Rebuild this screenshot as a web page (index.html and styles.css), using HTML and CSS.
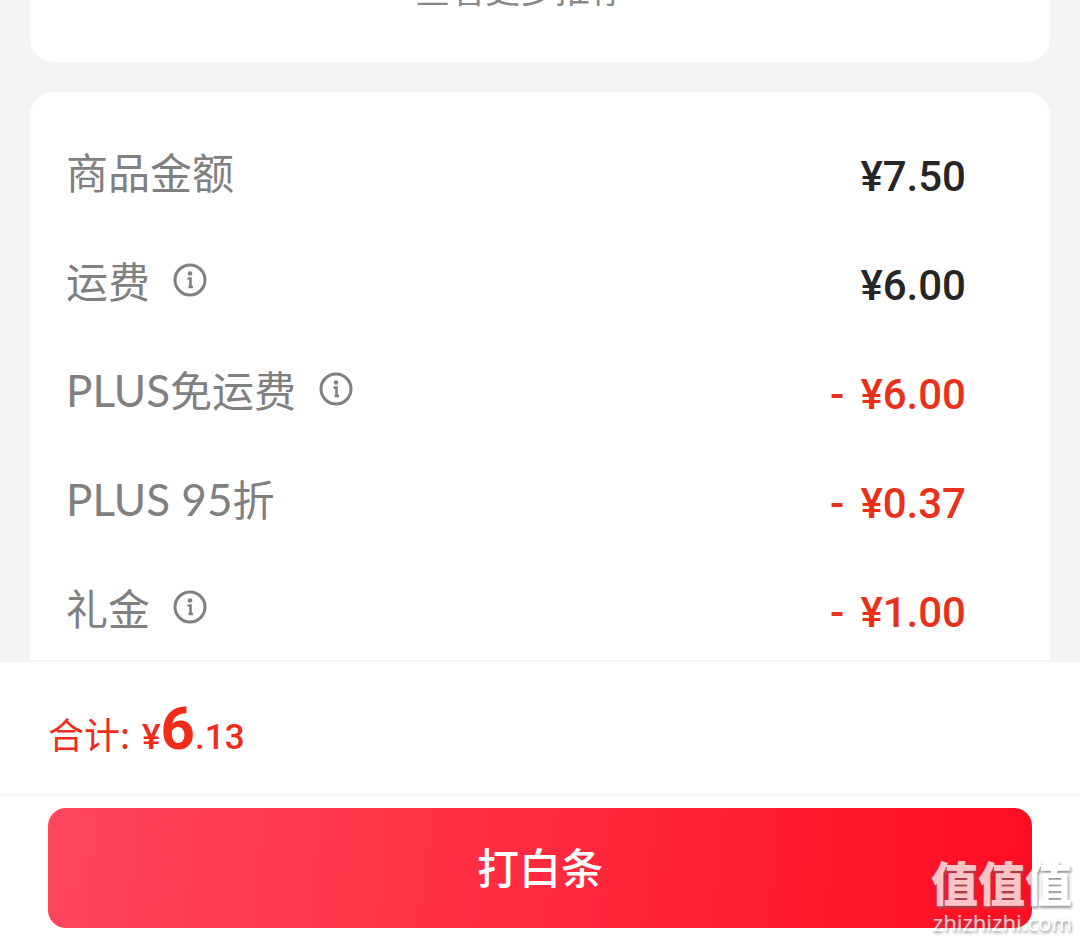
FILE: index.html
```html
<!DOCTYPE html>
<html lang="zh-CN">
<head>
<meta charset="utf-8">
<meta name="viewport" content="width=device-width, initial-scale=1">
<title>结算</title>
<link rel="stylesheet" href="styles.css">
</head>
<body>
<svg class="sprite" aria-hidden="true">
  <symbol id="info" viewBox="0 0 36 36">
    <circle cx="18" cy="18" r="15" fill="none" stroke="currentColor" stroke-width="3"/>
    <circle cx="18" cy="11.500" r="2.300" fill="currentColor"/>
    <path d="M15.500 16.500h3v8.500M16.500 25h4.500" fill="none" stroke="currentColor" stroke-width="2.600"/>
  </symbol>
</svg>
<div class="page">
  <main class="content">
    <section class="card more-card"><a class="more" href="#">查看更多推荐</a></section>
    <section class="card">
      <dl class="bill">
        <div class="row"><dt>商品金额</dt><dd>¥7.50</dd></div>
        <div class="row"><dt>运费<button class="info" type="button" aria-label="运费说明"><svg><use href="#info"/></svg></button></dt><dd>¥6.00</dd></div>
        <div class="row off"><dt><span class="latin">PLUS</span>免运费<button class="info" type="button" aria-label="PLUS免运费说明"><svg><use href="#info"/></svg></button></dt><dd><span>-</span><span>¥6.00</span></dd></div>
        <div class="row off"><dt><span class="latin">PLUS 95</span>折</dt><dd><span>-</span><span>¥0.37</span></dd></div>
        <div class="row off"><dt>礼金<button class="info" type="button" aria-label="礼金说明"><svg><use href="#info"/></svg></button></dt><dd><span>-</span><span>¥1.00</span></dd></div>
      </dl>
    </section>
  </main>
  <footer class="checkout">
    <p class="total"><span>合计:</span><span class="amount">¥<strong>6</strong>.13</span></p>
    <div class="action"><button class="pay" type="button">打白条</button></div>
  </footer>
  <div class="watermark"><span class="mark">值值值</span><span class="site">zhizhizhi.com</span></div>
</div>
</body>
</html>
```
FILE: styles.css
```css
* { box-sizing: border-box; }
body {
  margin: 0;
  background: #f4f4f4;
  font-family: "Noto Sans CJK SC", sans-serif;
}
.sprite { position: absolute; width: 0; height: 0; }
.page {
  position: relative;
  display: flex;
  flex-direction: column;
  height: 100vh;
  overflow: hidden;
}
.content {
  flex: 1;
  min-height: 0;
  display: flex;
  flex-direction: column;
  gap: 30px;
  padding: 0 30px;
  overflow: hidden;
}
.card {
  flex: none;
  padding: 24px 84px 24px 36px;
  border-radius: 24px;
  background: #fff;
}
/* Scrolled partly out of view */
.more-card {
  margin-top: -48px;
  padding: 20px 60px 58px 20px;
  text-align: center;
}
.more {
  display: block;
  font-size: 35px;
  line-height: 32px;
  color: #888;
  text-decoration: none;
}
.bill { margin: 0; }
.row {
  display: flex;
  align-items: center;
  justify-content: space-between;
  height: 109px;
  font-size: 42px;
  line-height: 60px;
  color: #808080;
}
.row dt { display: flex; align-items: center; }
.row dd {
  display: flex;
  gap: 16px;
  margin: 0;
  padding-top: 12px;
  font-family: Roboto, sans-serif;
  font-weight: 500;
  color: #262626;
}
.off dd { color: #e8301a; }
.latin { padding-top: 2px; font-family: Lato, sans-serif; font-size: 44px; white-space: pre; }
.info {
  display: flex;
  margin-left: 22px;
  padding: 0;
  border: 0;
  background: none;
  color: #808080;
}
.info svg { width: 36px; height: 36px; }
.checkout { background: #fff; border-top: 2px solid #f4f4f4; }
.total {
  display: flex;
  align-items: baseline;
  gap: 12px;
  height: 132px;
  margin: 0;
  padding: 31px 48px 0;
  font-size: 36px;
  line-height: 72px;
  color: #f02b1a;
}
.amount { font-family: Roboto, sans-serif; font-weight: 500; font-size: 35px; }
.amount strong { font-size: 60px; font-weight: 700; }
.action { padding: 12px 48px; border-top: 2px solid #f6f6f6; }
.pay {
  display: block;
  width: 100%;
  height: 120px;
  padding: 0 0 4px;
  border: 0;
  border-radius: 18px;
  background: linear-gradient(96deg, #ff475d, #ff0d20);
  color: #fff;
  font: 500 42px/60px "Noto Sans CJK SC", sans-serif;
}
.watermark {
  position: absolute;
  right: 8px;
  bottom: 6px;
  display: flex;
  flex-direction: column;
  align-items: flex-end;
  color: #fff;
  opacity: 0.75;
  text-shadow: 1px 2px 3px #666;
  pointer-events: none;
}
.mark { font-size: 47px; line-height: 58px; font-weight: 900; }
.site { font: 400 22px/24px "Noto Sans", sans-serif; }
```
